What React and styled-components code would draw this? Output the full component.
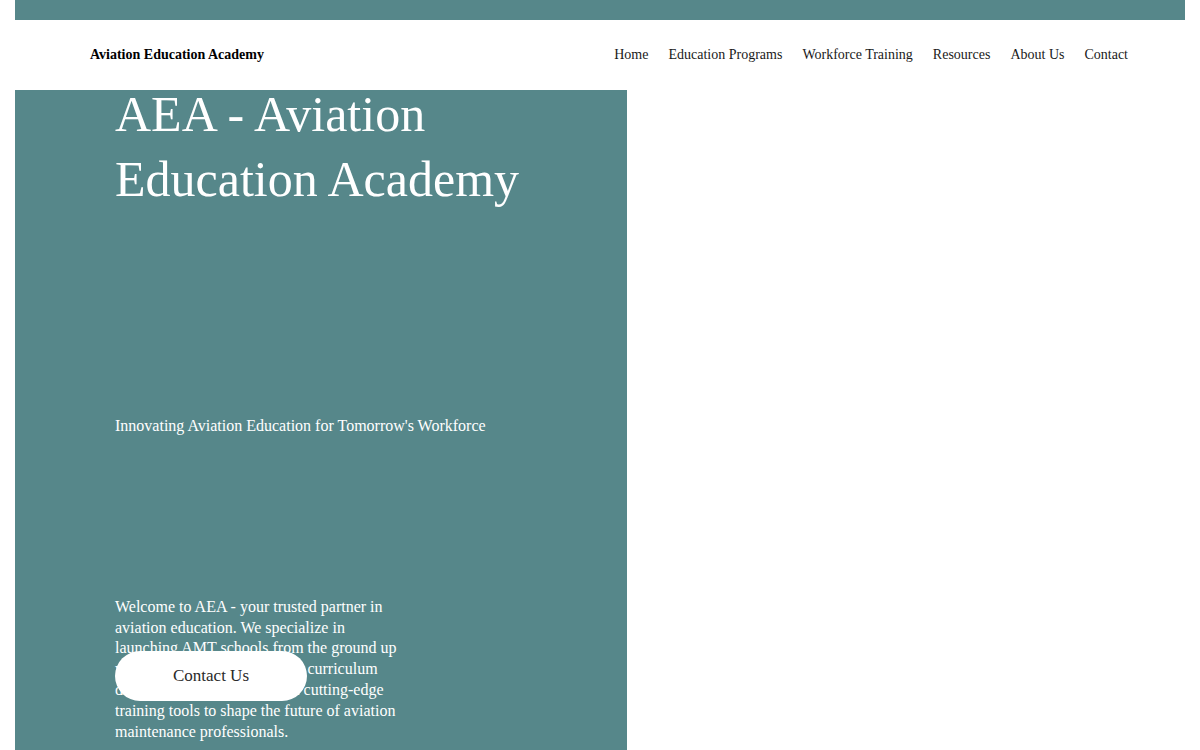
import React from "react";
import styled, { createGlobalStyle } from "styled-components";

const Global = createGlobalStyle`
  html, body { margin: 0; padding: 0; background: #ffffff; }
  body { font-family: "Liberation Serif", "Times New Roman", serif; }
  * { box-sizing: border-box; }
`;

const TEAL = "rgb(86, 135, 138)";

const Page = styled.div`
  padding: 0 15px;
`;

const TopBar = styled.div`
  height: 20px;
  background: ${TEAL};
`;

const Header = styled.header`
  height: 70px;
  display: flex;
  align-items: center;
  justify-content: space-between;
  padding: 0 57px 0 75px;
  background: #ffffff;
`;

const Brand = styled.div`
  font-size: 14px;
  font-weight: 700;
  color: #000;
`;

const Nav = styled.nav`
  display: flex;
  gap: 20px;
`;

const NavLink = styled.a`
  font-size: 14px;
  color: #1a1a1a;
  text-decoration: none;
`;

const Hero = styled.section`
  width: 612px;
  min-height: 660px;
  background: ${TEAL};
  padding: 0 0 10px 100px;
  color: #ffffff;
  display: flex;
  flex-direction: column;
`;

const Title = styled.h1`
  margin: -8px 0 0;
  font-size: 50px;
  font-weight: 400;
  line-height: 65px;
`;

const Subtitle = styled.p`
  margin: 204px 0 0;
  font-size: 16px;
  line-height: 20.8px;
`;

const IntroArea = styled.div`
  margin-top: 160px;
  display: grid;
`;

const Intro = styled.p`
  grid-area: 1 / 1;
  margin: 0;
  width: 290px;
  font-size: 16px;
  line-height: 20.8px;
`;

const ContactButton = styled.button`
  grid-area: 1 / 1;
  align-self: start;
  margin-top: 54px;
  width: 192px;
  height: 50px;
  border: none;
  border-radius: 25px;
  background: #ffffff;
  color: #2a2a2a;
  font-family: "Liberation Serif", "Times New Roman", serif;
  font-size: 17px;
  cursor: pointer;
  z-index: 1;
`;

const links = [
  "Home",
  "Education Programs",
  "Workforce Training",
  "Resources",
  "About Us",
  "Contact",
];

export default function App() {
  return (
    <Page>
      <Global />
      <TopBar />
      <Header>
        <Brand>Aviation Education Academy</Brand>
        <Nav>
          {links.map((l) => (
            <NavLink key={l} href="#">
              {l}
            </NavLink>
          ))}
        </Nav>
      </Header>
      <Hero>
        <Title>
          AEA - Aviation
          <br />
          Education Academy
        </Title>
        <Subtitle>Innovating Aviation Education for Tomorrow's Workforce</Subtitle>
        <IntroArea>
          <Intro>
            Welcome to AEA - your trusted partner in aviation education. We
            specialize in launching AMT schools from the ground up with a
            robust, comprehensive curriculum design, FAA compliance and
            cutting-edge training tools to shape the future of aviation
            maintenance professionals.
          </Intro>
          <ContactButton>Contact Us</ContactButton>
        </IntroArea>
      </Hero>
    </Page>
  );
}
